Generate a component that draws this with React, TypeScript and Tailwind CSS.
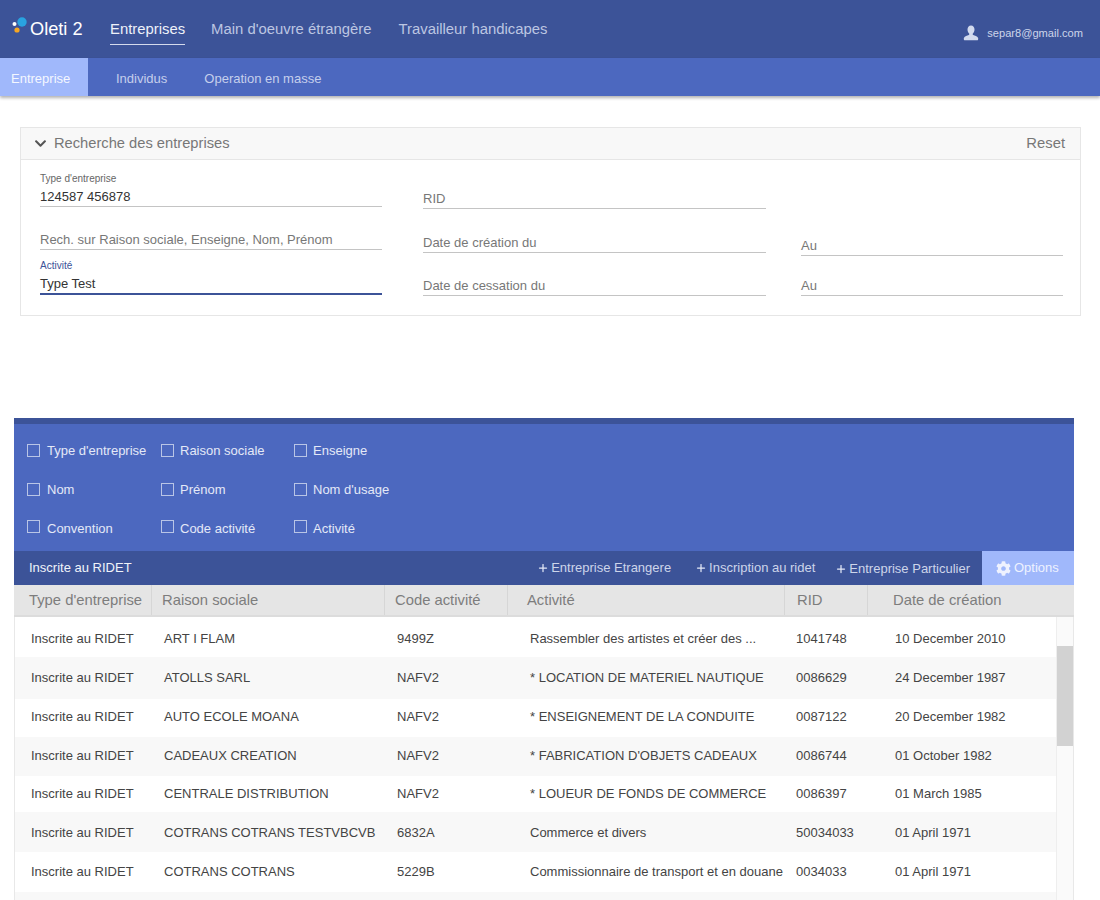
import { Plus } from "lucide-react";
import { FaChevronDown, FaCog } from "react-icons/fa";

const rows = [
  { h: "h-[40px] pt-[4px]", c: ["ART I FLAM", "9499Z", "Rassembler des artistes et créer des ...", "1041748", "10 December 2010"] },
  { h: "h-[41.7px]", c: ["ATOLLS SARL", "NAFV2", "* LOCATION DE MATERIEL NAUTIQUE", "0086629", "24 December 1987"] },
  { h: "h-[38.3px] pb-[2px]", c: ["AUTO ECOLE MOANA", "NAFV2", "* ENSEIGNEMENT DE LA CONDUITE", "0087122", "20 December 1982"] },
  { h: "h-[39px] pb-[2px]", c: ["CADEAUX CREATION", "NAFV2", "* FABRICATION D'OBJETS CADEAUX", "0086744", "01 October 1982"] },
  { h: "h-[36px]", c: ["CENTRALE DISTRIBUTION", "NAFV2", "* LOUEUR DE FONDS DE COMMERCE", "0086397", "01 March 1985"] },
  { h: "h-[40px] pt-[2px]", c: ["COTRANS COTRANS TESTVBCVB", "6832A", "Commerce et divers", "50034033", "01 April 1971"] },
  { h: "h-[40px]", c: ["COTRANS COTRANS", "5229B", "Commissionnaire de transport et en douane", "0034033", "01 April 1971"] },
  { h: "h-[40px]", c: ["", "", "", "", ""] },
];

function Check({ label, w, gap, up }: { label: string; w: string; gap: string; up?: boolean }) {
  return (
    <div className={`flex items-center ${gap} ${w}`}>
      <span className={`w-[13px] h-[13px] border border-[#b9c5e6] shrink-0 ${up ? "-translate-y-[2px]" : ""}`} />
      <span className="text-[13px] leading-none text-[#e4e9f7] whitespace-nowrap">{label}</span>
    </div>
  );
}

function Field({ label, value, w, h, focused, placeholder }: { label?: string; value: string; w: string; h: string; focused?: boolean; placeholder?: boolean }) {
  return (
    <div className={`${w} ${h} flex flex-col justify-end ${focused ? "border-b-2 border-[#3c5398]" : "border-b border-[#c4c4c4]"}`}>
      {label && (
        <div className={`text-[10px] leading-[12px] mb-[4px] ${focused ? "text-[#3c5398]" : "text-[#666]"}`}>{label}</div>
      )}
      <div className={`text-[13px] leading-[15px] mb-[2px] ${placeholder ? "text-[#777]" : "text-[#333]"}`}>{value}</div>
    </div>
  );
}

export default function App() {
  return (
    <div className="h-[900px] overflow-hidden bg-white font-['Liberation_Sans',Arial,sans-serif]">
      <header className="h-[58px] bg-[#3c5398] flex items-center">
        <div className="relative w-[30px] h-[58px] shrink-0">
          <svg className="absolute left-[11px] top-[15px]" width="20" height="20" viewBox="0 0 20 20">
            <circle cx="11" cy="7" r="4.7" fill="#29a3e0" />
            <circle cx="3.5" cy="9" r="2" fill="#ffffff" />
            <circle cx="6" cy="15" r="2.6" fill="#f5a623" />
          </svg>
        </div>
        <span className="text-[18.2px] text-white w-[80px] mt-[1px]">Oleti 2</span>
        <nav className="flex items-center text-[14.85px] text-[#bcc6e2] mt-[1px]">
          <span className="text-[#eef1f9] border-b border-[#d4daec] pb-[3px] mt-[4px]">Entreprises</span>
          <span className="ml-[26px]">Main d'oeuvre étrangère</span>
          <span className="ml-[27px]">Travailleur handicapes</span>
        </nav>
        <div className="ml-auto flex items-center gap-[8px] mr-[17px] mt-[8px]">
          <svg width="16" height="16" viewBox="0 0 16 16" fill="#d2daee">
            <path d="M8 0.5c2.2 0 3.5 1.7 3.5 4 0 1.7-.7 3.2-1.6 4 -.3.4-.3 1.2.3 1.6 1.6.8 4.1 1.2 4.8 2.7.3.7.3 2-.3 2.4H1.3c-.6-.4-.6-1.7-.3-2.4.7-1.5 3.2-1.9 4.8-2.7.6-.4.6-1.2.3-1.6-.9-.8-1.6-2.3-1.6-4 0-2.3 1.3-4 3.5-4z" />
          </svg>
          <span className="text-[11.1px] text-[#cdd5ea]">separ8@gmail.com</span>
        </div>
      </header>

      <div className="h-[38px] bg-[#4c68bf] flex items-stretch text-[13px] shadow-[0_2px_3px_rgba(0,0,0,0.3)]">
        <div className="w-[88px] bg-[#a0b8fb] text-[#f4f7ff] flex items-center pl-[11px] pt-[3px]">Entreprise</div>
        <div className="text-[#c5cfec] flex items-center ml-[28px] pt-[3px]">Individus</div>
        <div className="text-[#c5cfec] flex items-center ml-[37px] pt-[3px]">Operation en masse</div>
      </div>

      <section className="ml-[20px] mt-[31px] w-[1061px] h-[189px] border border-[#e6e6e6]">
        <div className="h-[32px] bg-[#f8f8f8] border-b border-[#e6e6e6] flex items-center pl-[13px] pr-[15px]">
          <FaChevronDown size={13} className="text-[#555] mr-[7px]" />
          <span className="text-[14.7px] text-[#777]">Recherche des entreprises</span>
          <span className="ml-auto text-[14.8px] text-[#777]">Reset</span>
        </div>
        <div className="flex pl-[19px]">
          <div className="w-[342px] flex flex-col">
            <Field w="w-[342px]" h="h-[47px]" label="Type d'entreprise" value="124587 456878" />
            <Field w="w-[342px]" h="h-[43px]" value="Rech. sur Raison sociale, Enseigne, Nom, Prénom" placeholder />
            <Field w="w-[342px]" h="h-[45px]" label="Activité" value="Type Test" focused />
          </div>
          <div className="w-[343px] ml-[41px] flex flex-col">
            <Field w="w-[343px]" h="h-[49px]" value="RID" placeholder />
            <Field w="w-[343px]" h="h-[44px]" value="Date de création du" placeholder />
            <Field w="w-[343px]" h="h-[43px]" value="Date de cessation du" placeholder />
          </div>
          <div className="w-[262px] ml-[35px] flex flex-col">
            <div className="h-[49px]" />
            <Field w="w-[262px]" h="h-[47px]" value="Au" placeholder />
            <Field w="w-[262px]" h="h-[40px]" value="Au" placeholder />
          </div>
        </div>
      </section>

      <section className="ml-[14px] mt-[102px] w-[1060px]">
        <div className="h-[6px] bg-[#3c5398]" />
        <div className="h-[127px] bg-[#4c68bf] pl-[13px] pt-[20px] flex flex-col gap-[26px]">
          <div className="flex">
            <Check w="w-[134px]" gap="gap-[7px]" label="Type d'entreprise" />
            <Check w="w-[133px]" gap="gap-[6px]" label="Raison sociale" />
            <Check w="w-[133px]" gap="gap-[6px]" label="Enseigne" />
          </div>
          <div className="flex">
            <Check w="w-[134px]" gap="gap-[7px]" label="Nom" />
            <Check w="w-[133px]" gap="gap-[6px]" label="Prénom" />
            <Check w="w-[133px]" gap="gap-[6px]" label="Nom d'usage" />
          </div>
          <div className="flex">
            <Check w="w-[134px]" gap="gap-[7px]" label="Convention" up />
            <Check w="w-[133px]" gap="gap-[6px]" label="Code activité" up />
            <Check w="w-[133px]" gap="gap-[6px]" label="Activité" up />
          </div>
        </div>
        <div className="h-[34px] bg-[#3c5398] flex items-stretch text-[13px]">
          <div className="pl-[15px] flex items-center text-[#f0f3fa] text-[13px]">Inscrite au RIDET</div>
          <div className="ml-auto flex items-center text-[#cdd5ea]">
            <span className="flex items-center gap-[2px] mr-[24px]"><Plus size={12} strokeWidth={2.5} className="text-[#e4e9f7]" />Entreprise Etrangere</span>
            <span className="flex items-center gap-[2px] mr-[20px]"><Plus size={12} strokeWidth={2.5} className="text-[#e4e9f7]" />Inscription au ridet</span>
            <span className="flex items-center gap-[2px] mr-[12px] mt-[2px]"><Plus size={12} strokeWidth={2.5} className="text-[#e4e9f7]" />Entreprise Particulier</span>
          </div>
          <div className="w-[92px] bg-[#a0b8fb] flex items-center pl-[14px] gap-[3px] text-[#eef2ff]">
            <FaCog size={15} className="text-[#eef2ff]" />Options
          </div>
        </div>
        <div className="h-[32px] bg-[#e5e5e5] border-b-2 border-[#dcdcdc] flex text-[14.8px] text-[#7d7d7d]">
          <div className="w-[138px] pl-[15px] flex items-center border-r border-[#d6d6d6]">Type d'entreprise</div>
          <div className="w-[233px] pl-[10px] flex items-center border-r border-[#d6d6d6]">Raison sociale</div>
          <div className="w-[123px] pl-[10px] flex items-center border-r border-[#d6d6d6]">Code activité</div>
          <div className="w-[277px] pl-[19px] flex items-center border-r border-[#d6d6d6]">Activité</div>
          <div className="w-[83px] pl-[12px] flex items-center border-r border-[#d6d6d6]">RID</div>
          <div className="flex-1 pl-[25px] flex items-center">Date de création</div>
        </div>
        <div className="flex border-l border-r border-[#e8e8e8]">
          <div className="flex-1 min-w-0">
            {rows.map((r, i) => (
              <div key={i} className={`${r.h} flex items-center text-[13px] text-[#444] whitespace-nowrap ${i % 2 ? "bg-[#f8f8f8]" : "bg-white"}`}>
                <div className="w-[149px] pl-[16px]">{r.c[0] ? "Inscrite au RIDET" : ""}</div>
                <div className="w-[233px]">{r.c[0]}</div>
                <div className="w-[133px]">{r.c[1]}</div>
                <div className="w-[266px]">{r.c[2]}</div>
                <div className="w-[99px]">{r.c[3]}</div>
                <div>{r.c[4]}</div>
              </div>
            ))}
          </div>
          <div className="w-[17px] shrink-0 bg-[#fafafa] border-l border-[#eeeeee] pt-[29px]">
            <div className="h-[100px] bg-[#d2d2d2]" />
          </div>
        </div>
      </section>
    </div>
  );
}
